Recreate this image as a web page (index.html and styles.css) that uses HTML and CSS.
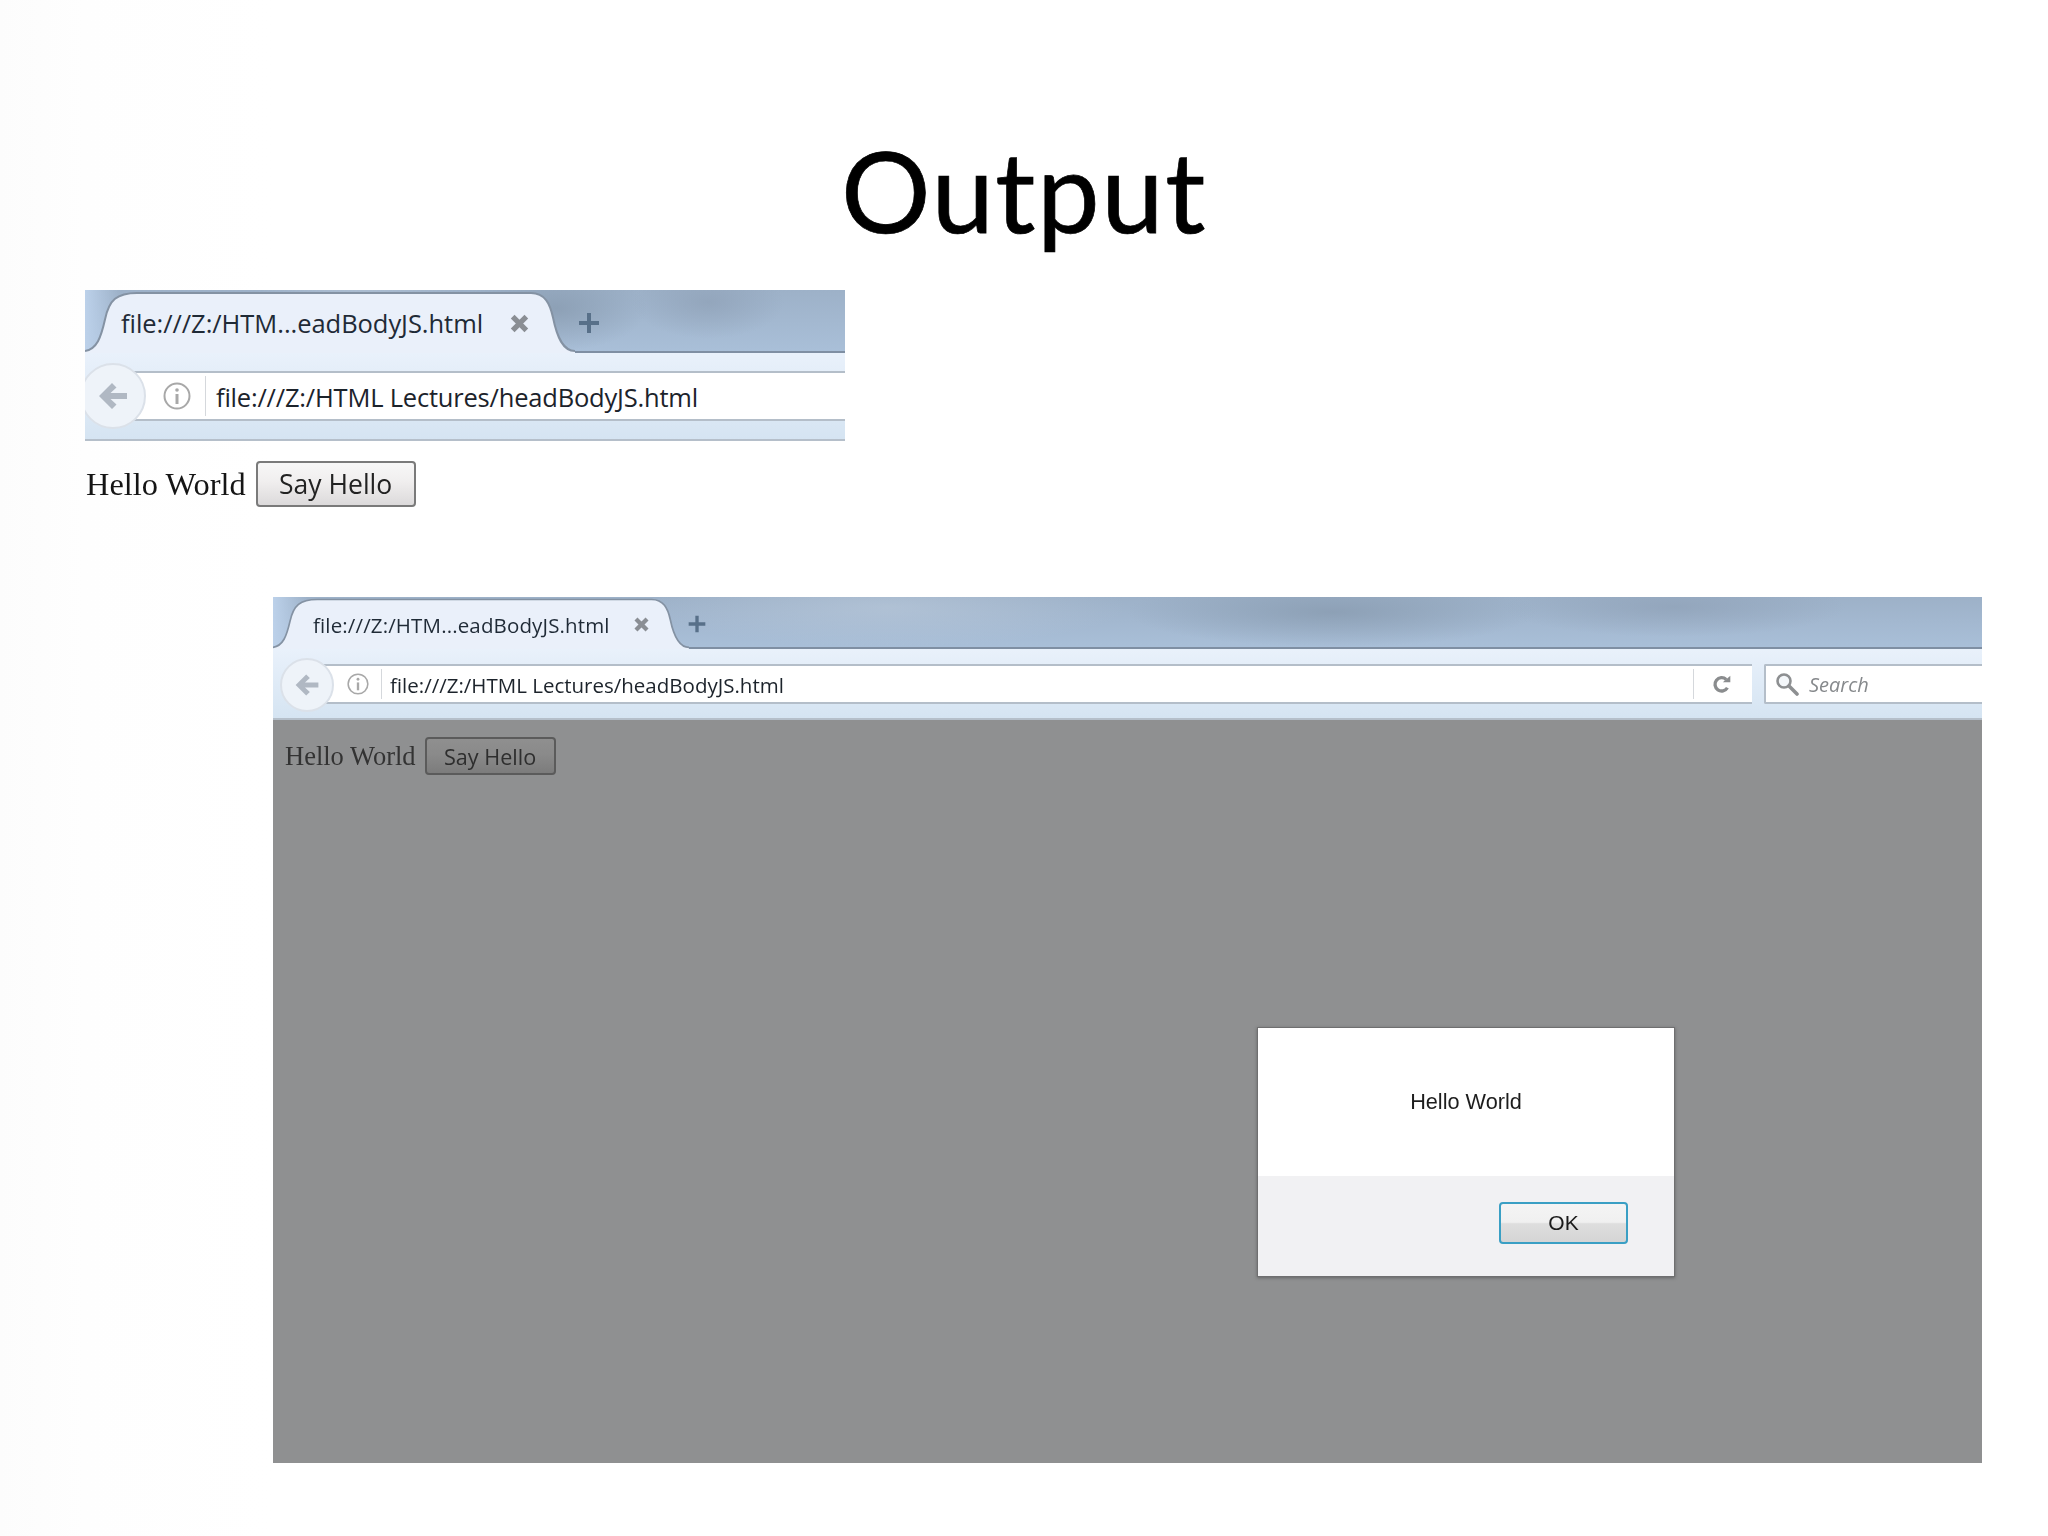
FILE: index.html
```html
<!DOCTYPE html>
<html lang="en">
<head>
<meta charset="utf-8">
<title>Output</title>
<link rel="stylesheet" href="styles.css">
</head>
<body>
<svg class="defs" aria-hidden="true">
  <symbol id="i-close" viewBox="0 0 20 20"><path d="M3.500 3.500L16.500 16.500M16.500 3.500L3.500 16.500" fill="none" stroke="currentColor" stroke-width="5"/></symbol>
  <symbol id="i-plus" viewBox="0 0 24 24"><path d="M12 2V22M2 12H22" fill="none" stroke="currentColor" stroke-width="4"/></symbol>
  <symbol id="i-back" viewBox="0 0 32 32"><path d="M2 16L15 3L19.500 7.500L13.500 13H30V19H13.500L19.500 24.500L15 29Z" fill="currentColor"/></symbol>
  <symbol id="i-info" viewBox="0 0 28 28"><circle cx="14" cy="14" r="12.500" fill="none" stroke="currentColor" stroke-width="2"/><circle cx="14" cy="8" r="1.800" fill="currentColor"/><path d="M14 12V22" stroke="currentColor" stroke-width="3"/></symbol>
  <symbol id="i-reload" viewBox="0 0 24 24"><path d="M18.500 16.500A8 8 0 1 1 17 6.500" fill="none" stroke="currentColor" stroke-width="4"/><path d="M13 10H22V2Z" fill="currentColor"/></symbol>
  <symbol id="i-search" viewBox="0 0 24 24"><circle cx="9" cy="9" r="6.500" fill="#f4f7fa" stroke="currentColor" stroke-width="2.600"/><path d="M14 14L22 22" stroke="currentColor" stroke-width="3.600" stroke-linecap="round"/></symbol>
</svg>

<main class="slide">
  <h1 class="title">Output</h1>

  <section class="browser browser-small">
    <div class="strip">
      <div class="tab">
        <svg class="tab-shape" viewBox="0 0 490 64" preserveAspectRatio="none" aria-hidden="true"><path d="M0 62C12 60 16 48 20 30C24 10 32 3 52 3L446 3C460 3 465 14 468 28C472 48 478 62 490 62V64H0Z" fill="#eaf0fa" stroke="none"/><path d="M0 62C12 60 16 48 20 30C24 10 32 3 52 3L446 3C460 3 465 14 468 28C472 48 478 62 490 62" fill="none" stroke="#8492a3" stroke-width="2"/></svg>
        <span class="tab-label">file:///Z:/HTM...eadBodyJS.html</span>
        <svg class="tab-close"><use href="#i-close"/></svg>
      </div>
      <svg class="tab-plus"><use href="#i-plus"/></svg>
    </div>
    <div class="toolbar">
      <div class="back"><svg class="back-arrow"><use href="#i-back"/></svg></div>
      <div class="urlbar">
        <svg class="info"><use href="#i-info"/></svg>
        <span class="sep"></span>
        <span class="url">file:///Z:/HTML Lectures/headBodyJS.html</span>
      </div>
    </div>
    <div class="page">
      <div class="page-row">
        <span class="hello">Hello World</span>
        <button class="say" type="button">Say Hello</button>
      </div>
    </div>
  </section>

  <section class="browser browser-large">
    <div class="strip">
      <div class="tab">
        <svg class="tab-shape" viewBox="0 0 490 64" preserveAspectRatio="none" aria-hidden="true"><path d="M0 62C12 60 16 48 20 30C24 10 32 3 52 3L446 3C460 3 465 14 468 28C472 48 478 62 490 62V64H0Z" fill="#eaf0fa" stroke="none"/><path d="M0 62C12 60 16 48 20 30C24 10 32 3 52 3L446 3C460 3 465 14 468 28C472 48 478 62 490 62" fill="none" stroke="#8492a3" stroke-width="2"/></svg>
        <span class="tab-label">file:///Z:/HTM...eadBodyJS.html</span>
        <svg class="tab-close"><use href="#i-close"/></svg>
      </div>
      <svg class="tab-plus"><use href="#i-plus"/></svg>
    </div>
    <div class="toolbar">
      <div class="back"><svg class="back-arrow"><use href="#i-back"/></svg></div>
      <div class="urlbar">
        <svg class="info"><use href="#i-info"/></svg>
        <span class="sep"></span>
        <span class="url">file:///Z:/HTML Lectures/headBodyJS.html</span>
        <span class="spacer"></span>
        <span class="sep"></span>
        <svg class="reload"><use href="#i-reload"/></svg>
      </div>
      <div class="search">
        <svg class="search-icon"><use href="#i-search"/></svg>
        <span class="search-text">Search</span>
      </div>
    </div>
    <div class="page page-dim">
      <div class="page-row">
        <span class="hello">Hello World</span>
        <button class="say" type="button">Say Hello</button>
      </div>
      <div class="modal" role="dialog">
        <div class="modal-body">Hello World</div>
        <div class="modal-foot"><button class="ok" type="button">OK</button></div>
      </div>
    </div>
  </section>
</main>
</body>
</html>
```
FILE: styles.css
```css
html, body { margin: 0; padding: 0; background: #fff; }
.defs { display: none; }

.slide {
  width: 2048px;
  height: 1536px;
  overflow: hidden;
  background: linear-gradient(90deg, #fcfcfc 0, #fefefe 85px, #fff 273px);
}

.title {
  margin: 0;
  height: 290px;
  box-sizing: border-box;
  padding-top: 124px;
  text-align: center;
  font: 400 112px/132px Lato, "Open Sans", sans-serif;
  letter-spacing: 1.500px;
  -webkit-text-stroke: .7px #000;
  color: #000;
}

.browser {
  position: relative;
  overflow: hidden;
  font-family: "Open Sans", "Noto Sans", sans-serif;
  filter: blur(.5px);
}

/* tab strip */
.strip {
  display: flex;
  align-items: flex-start;
  box-sizing: border-box;
  border-bottom: 2px solid #7f8fa3;
  background:
    linear-gradient(90deg, #bcd1ea, rgba(188,209,234,0) 34px),
    radial-gradient(ellipse 12% 70% at 62% 30%, rgba(136,155,176,.8), transparent),
    radial-gradient(ellipse 10% 60% at 82% 20%, rgba(142,160,182,.7), transparent),
    radial-gradient(ellipse 14% 80% at 36% 20%, rgba(196,209,224,.45), transparent),
    linear-gradient(180deg, #9db1c8, #a9bfd8);
}
.tab { position: relative; display: flex; align-items: center; flex: none; }
.tab-shape { position: absolute; left: 0; top: 0; width: 100%; height: 100%; }
.tab-label, .tab-close { position: relative; }
.tab-label { white-space: nowrap; color: #1f2a36; }
.tab-close { color: #8a8e94; flex: none; }
.tab-plus { color: #587089; flex: none; align-self: center; }

/* toolbar */
.toolbar {
  position: relative;
  display: flex;
  box-sizing: border-box;
  background: linear-gradient(180deg, #e9f1fb, #d5e4f2);
  border-bottom: 2px solid #b5bfca;
}
.back {
  position: absolute;
  display: flex;
  align-items: center;
  justify-content: center;
  box-sizing: border-box;
  border-radius: 50%;
  border: 2px solid #dbe1e9;
  background: #eef3f9;
  z-index: 1;
}
.back-arrow { color: #b0b8c3; }
.urlbar {
  display: flex;
  flex: 1;
  align-items: center;
  box-sizing: border-box;
  background: #fff;
  border-top: 2px solid #b4bec9;
  border-bottom: 2px solid #b4bec9;
}
.info { color: #a8a8a8; flex: none; }
.sep { width: 1px; align-self: stretch; background: #d5d8dc; margin: 3px 0; flex: none; }
.url { color: #1c232b; white-space: nowrap; }
.spacer { flex: 1; }
.reload { color: #8a8c8e; flex: none; }

.search {
  display: flex;
  align-items: center;
  flex: none;
  box-sizing: border-box;
  background: #fff;
  border: 2px solid #b4bec9;
  border-right: 0;
  border-radius: 2px 0 0 2px;
}
.search-icon { color: #8d8f91; flex: none; }
.search-text { font-style: italic; color: #86898c; }

/* page */
.page { position: relative; }
.page-row { display: flex; align-items: center; }
.hello { font-family: "Liberation Serif", "Times New Roman", serif; color: #151515; white-space: nowrap; }
.say {
  box-sizing: border-box;
  padding: 0;
  font-family: "Open Sans", "Noto Sans", sans-serif;
  color: #222;
  border: 2px solid #7a7a7a;
  border-radius: 4px;
  background: linear-gradient(180deg, #f7f7f7, #f0eeee 45%, #dcdadb);
}

/* small browser */
.browser-small { width: 760px; margin-left: 85px; }
.browser-small .strip { height: 63px; }
.browser-small .tab { width: 490px; height: 63px; padding-top: 3px; box-sizing: border-box; }
.browser-small .tab-label { margin-left: 36px; font-size: 25.500px; letter-spacing: -.05px; }
.browser-small .tab-close { width: 21px; height: 21px; margin-left: 26px; }
.browser-small .tab-plus { width: 24px; height: 24px; margin-left: 2px; margin-top: 4px; }
.browser-small .toolbar { height: 88px; padding-top: 18px; }
.browser-small .back { left: -5px; top: 10px; width: 66px; height: 66px; }
.browser-small .back-arrow { width: 32px; height: 32px; }
.browser-small .urlbar { height: 50px; margin-left: 28px; padding-left: 50px; }
.browser-small .info { width: 28px; height: 28px; margin-right: 14px; }
.browser-small .url { margin-left: 10px; font-size: 25.500px; letter-spacing: -.2px; padding-top: 1px; }
.browser-small .page { height: 156px; }
.browser-small .page-row { padding-top: 20px; padding-left: 1px; }
.browser-small .hello { font-size: 32.400px; }
.browser-small .say { width: 160px; height: 46px; margin-left: 10px; font-size: 26.500px; }

/* large browser */
.browser-large { width: 1709px; margin-left: 273px; }
.browser-large .strip { height: 52px; }
.browser-large .tab { width: 416px; height: 52px; padding-top: 3px; box-sizing: border-box; }
.browser-large .tab-label { margin-left: 40px; font-size: 20.500px; letter-spacing: .14px; }
.browser-large .tab-close { width: 17px; height: 17px; margin-left: 23px; }
.browser-large .tab-plus { width: 20px; height: 20px; margin-left: -2px; margin-top: 3px; }
.browser-large .toolbar { height: 71px; padding-top: 15px; }
.browser-large .back { left: 7px; top: 9px; width: 54px; height: 54px; }
.browser-large .back-arrow { width: 26px; height: 26px; }
.browser-large .urlbar { height: 40px; margin-left: 34px; padding-left: 40px; padding-right: 20px; }
.browser-large .info { width: 22px; height: 22px; margin-right: 12px; }
.browser-large .url { margin-left: 8px; font-size: 20.500px; padding-top: 1px; }
.browser-large .reload { width: 20px; height: 20px; margin-left: 18px; }
.browser-large .search { width: 218px; height: 40px; margin-left: 12px; padding-left: 9px; }
.browser-large .search-icon { width: 24px; height: 24px; margin-right: 10px; }
.browser-large .search-text { font-size: 20px; }

.page-dim { height: 743px; background: #8f9091; }
.browser-large .page-row { padding-top: 17px; padding-left: 12px; }
.browser-large .hello { font-size: 26.500px; color: #333; }
.browser-large .say {
  width: 131px;
  height: 38px;
  margin-left: 9px;
  font-size: 21.600px;
  color: #2e2e2e;
  border-color: #5b5b5b;
  background: linear-gradient(180deg, #8f8f8f, #8a8a8a 45%, #7c7c7c);
}

/* alert */
.modal {
  position: absolute;
  left: 984px;
  top: 307px;
  width: 418px;
  height: 250px;
  display: flex;
  flex-direction: column;
  box-sizing: border-box;
  border: 1px solid #6f6f70;
  box-shadow: 0 1px 3px rgba(60,60,60,.5);
  font-family: "Liberation Sans", Arial, sans-serif;
}
.modal-body {
  height: 148px;
  display: flex;
  align-items: center;
  justify-content: center;
  background: #fff;
  color: #1d1d1d;
  font-size: 21.700px;
}
.modal-foot {
  flex: 1;
  display: flex;
  justify-content: flex-end;
  align-items: flex-start;
  padding: 26px 46px 0 0;
  background: #f1f1f3;
}
.ok {
  box-sizing: border-box;
  width: 129px;
  height: 42px;
  padding: 0;
  font: 21px "Liberation Sans", Arial, sans-serif;
  color: #1a1a1a;
  border: 2px solid #3a9fc4;
  border-radius: 4px;
  background: linear-gradient(180deg, #f4f4f4, #f0f0f0 48%, #dedede 52%, #d5d5d5);
}
```
